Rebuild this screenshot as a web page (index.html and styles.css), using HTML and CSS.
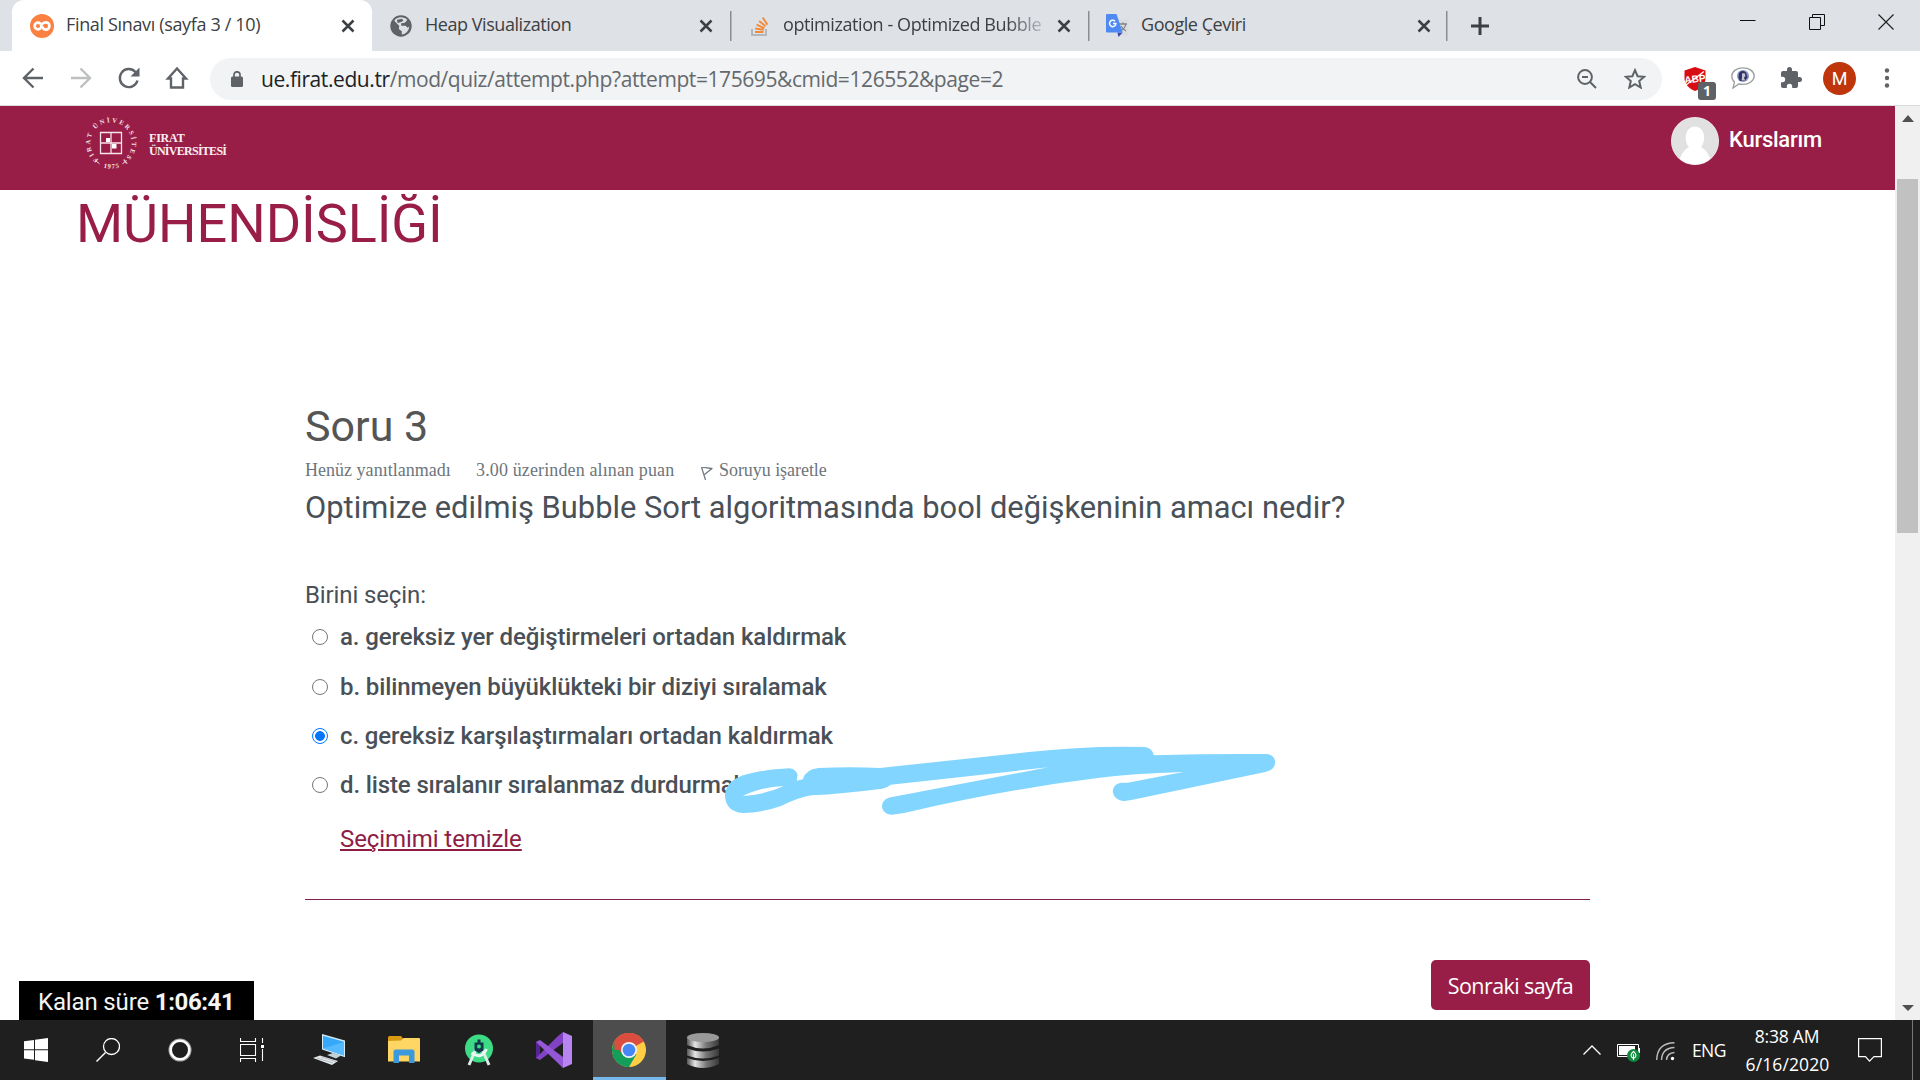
FILE: index.html
```html
<!DOCTYPE html>
<html lang="tr">
<head>
<meta charset="utf-8">
<title>Final Sınavı (sayfa 3 / 10)</title>
<link rel="stylesheet" href="styles.css">
</head>
<body>
<div class="browser">
  <div class="tabstrip">
    <div class="tab active">
      <svg class="fav" viewBox="0 0 24 24"><circle cx="12" cy="12" r="12" fill="#fb8142"/><g fill="none" stroke="#fff" stroke-width="2.700"><circle cx="8" cy="12" r="3.400"/><path d="M11.800 10.500c1.200-1.800 2.500-2.100 4-2.100a3.600 3.600 0 1 1-3.500 4.200"/></g></svg>
      <span class="label t1">Final Sınavı (sayfa 3 / 10)</span>
      <svg class="x" viewBox="0 0 14 14"><path d="M1.500 1.500l11 11M12.500 1.500l-11 11"/></svg>
    </div>
    <div class="tab">
      <svg class="fav globe" viewBox="0 0 22 22"><circle cx="11" cy="11" r="10.700" fill="#5f6368"/><path d="M11 2.300c2.500 0 5 .9 6.300 2.700l-2.500 2.800-3.600.5v2.500h4.300l2.200 2 1.500-1.300c-.2 4.300-3.500 7.600-7.400 8v-3.200l-3-2.300.5-3-5-5.300C5.300 3.800 8.300 2.300 11 2.300z" fill="#dee1e6"/><path d="M7 4.700l5-1 1.500 2-3 1.600-3 .7z" fill="#5f6368"/></svg>
      <span class="label t2">Heap Visualization</span>
      <svg class="x" viewBox="0 0 14 14"><path d="M1.500 1.500l11 11M12.500 1.500l-11 11"/></svg>
    </div>
    <div class="tab sep">
      <svg class="fav so" viewBox="0 0 18 20"><path d="M1 13v6h14v-6" fill="none" stroke="#b4b7ba" stroke-width="2"/><path d="M4 16h8.500M4.200 12.500l8.500 1.300M5.500 8.600l7.900 3.500M8.200 5l6.400 5.300M11.700 1.500l4.800 7.300" stroke="#f28a3c" stroke-width="1.900"/></svg>
      <span class="label t3">optimization - Optimized Bubble</span>
      <svg class="x" viewBox="0 0 14 14"><path d="M1.500 1.500l11 11M12.500 1.500l-11 11"/></svg>
    </div>
    <div class="tab sep">
      <svg class="fav gt" viewBox="0 0 23 23"><rect x="10" y="5" width="12.500" height="16.500" rx="1" fill="#dadcdf"/><path d="M13 10h8M17 8.500V10M19.800 10c-.5 3.500-3 5.700-5.300 6.700M15 12c1 2 2.500 3.700 5 5" fill="none" stroke="#80868b" stroke-width="1.300"/><path d="M11.500 18.500h5.200L12.500 23z" fill="#3949ab"/><path d="M1 0h9.500l6.200 18.500H1a1 1 0 0 1-1-1V1a1 1 0 0 1 1-1z" fill="#4f8af3"/><path d="M9 7.200a3.200 3.200 0 1 0 .9 2.300H7" fill="none" stroke="#fff" stroke-width="1.500"/></svg>
      <span class="label t4">Google Çeviri</span>
      <svg class="x" viewBox="0 0 14 14"><path d="M1.500 1.500l11 11M12.500 1.500l-11 11"/></svg>
    </div>
    <div class="newtab"><svg width="18" height="18" viewBox="0 0 18 18"><path d="M9 0v18M0 9h18" stroke="#3c4043" stroke-width="3"/></svg></div>
    <div class="winbtns">
      <svg width="16" height="16" viewBox="0 0 16 16"><path d="M0 6.500h15.500" stroke="#111" stroke-width="1"/></svg>
      <svg width="16" height="16" viewBox="0 0 16 16"><path d="M.5 3.500h11v12H.500zM3.500 3V.500h12v11H12" fill="none" stroke="#111"/></svg>
      <svg width="16" height="16" viewBox="0 0 16 16"><path d="M.500.500l15 15M15.500.500l-15 15" stroke="#222" stroke-width="1.200"/></svg>
    </div>
  </div>
  <div class="toolbar">
    <svg class="nav" viewBox="0 0 24 24"><path d="M22 12H3.500M12.500 2.500L3 12l9.500 9.500" /></svg>
    <svg class="nav off" viewBox="0 0 24 24"><path d="M2 12h18.500M11.500 2.500L21 12l-9.500 9.500"/></svg>
    <svg class="nav" viewBox="0 0 24 24"><path d="M20.500 14.500A9 9 0 1 1 18.500 6L20 7.500"/><path d="M22.500 1.500v9h-9z" fill="#5f6368" stroke="none"/></svg>
    <svg class="nav" viewBox="0 0 24 24"><path d="M3 12.500L12 2.500l9 10h-3v9H6v-9z"/></svg>
    <div class="omnibox">
      <svg class="lock" viewBox="0 0 12 16"><rect y="5.500" width="12" height="10.500" rx="1.500" fill="#5f6368"/><path d="M3 6V3.800a3 3 0 0 1 6 0V6" fill="none" stroke="#5f6368" stroke-width="1.700"/></svg>
      <span class="url"><b>ue.firat.edu.tr</b>/mod/quiz/attempt.php?attempt=175695&amp;cmid=126552&amp;page=2</span>
      <svg class="mag" viewBox="0 0 20 20"><circle cx="8" cy="8" r="6.900"/><path d="M13 13l6 6M5 8h6"/></svg>
      <svg class="star" viewBox="0 0 22 21"><path d="M11 2.200l2.600 6 6.600.6-5 4.300 1.500 6.400L11 16.100l-5.700 3.400 1.500-6.400-5-4.300 6.600-.6z"/></svg>
    </div>
    <div class="adb">
      <svg width="22" height="24" viewBox="0 0 22 24"><path d="M11 0l10.500 3.500V11c0 6-4 10.500-10.500 13C4.500 21.500.500 17 .500 11V3.500z" fill="#d80d13"/><text x="11" y="15.500" text-anchor="middle" class="abp" transform="rotate(-6 11 12)">ABP</text><path d="M2 18L20 4.500" stroke="#fff" stroke-width="1.300"/></svg>
      <span class="badge">1</span>
    </div>
    <svg class="chat" viewBox="0 0 24 22"><path d="M12 .8c6 0 11.200 3.500 11.200 8.200S18 17.400 12 17.400c-1.500 0-3-.2-4.200-.5L2 21l1.500-6C1.500 13.500.8 11 .8 9 .8 4.300 6 .8 12 .8z" fill="#fff" stroke="#9a9da1" stroke-width="1.300"/><ellipse cx="12" cy="9" rx="6" ry="6" fill="#8d93bd"/><path d="M8 6q3-3.500 7-.5l1.500 5-3 3.500H9l-1.500-3z" fill="#2b3468"/><path d="M11 6.500l2.500-.5 1 3-1.500 1.500 1 3h-3.500l.5-3z" fill="#c9c3cf"/></svg>
    <svg class="puz" viewBox="0 0 24 24"><path d="M20.500 11H19V7a2 2 0 0 0-2-2h-4V3.500a2.500 2.500 0 0 0-5 0V5H4a2 2 0 0 0-2 2v3.800h1.500a2.700 2.700 0 0 1 0 5.400H2V20c0 1.100.9 2 2 2h3.800v-1.500a2.700 2.700 0 0 1 5.400 0V22H17a2 2 0 0 0 2-2v-4h1.500a2.500 2.500 0 0 0 0-5z" fill="#5f6368"/></svg>
    <span class="profile">M</span>
    <svg class="dots" viewBox="0 0 6 20"><circle cx="3" cy="2.500" r="2.200"/><circle cx="3" cy="10" r="2.200"/><circle cx="3" cy="17.500" r="2.200"/></svg>
  </div>
</div>

<div class="viewport">
  <div class="page">
    <header class="site">
      <svg class="seal" viewBox="0 0 54 54">
        <defs><path id="ring" d="M14.400 43.600A20.800 20.800 0 1 1 39.600 43.600"/><path id="foot" d="M15 50.500Q27 54.500 39 50.500"/></defs>
        <text class="ringtext"><textPath href="#ring" textLength="104">FIRAT ÜNİVERSİTESİ</textPath></text>
        <text class="ringtext"><textPath href="#foot" startOffset="4.500" textLength="16">1975</textPath></text>
        <path d="M11.500 44.500l4 3.300M38.500 47.800l4-3.300" stroke="#f5e4ea" fill="none"/>
        <path d="M16.500 16.500h21v21h-21zM27 16.500V27h10.500M27 37.500V27H16.500" fill="none" stroke="#f5e4ea" stroke-width="1.300"/>
        <path d="M22 22h4v4h-4zM28 28h4.500v4.500H28z" fill="#fff"/>
      </svg>
      <div class="uni"><span class="u1">FIRAT</span><span class="u2">ÜNİVERSİTESİ</span></div>
      <svg class="avatar" viewBox="0 0 48 48"><defs><clipPath id="round"><circle cx="24" cy="24" r="23.500"/></clipPath></defs><circle cx="24" cy="24" r="24" fill="#f3e6ea"/><g clip-path="url(#round)"><path d="M0 0h48v48H0z" fill="#e1e1e1"/><path d="M8 48c0-9 5-15 10-18-5-5-5-20 6-20.500 11 .5 11 15.500 6 20.500 5 3 10 9 10 18z" fill="#fff"/></g></svg>
      <span class="courses">Kurslarım</span>
    </header>
    <h1>MÜHENDİSLİĞİ</h1>
    <main>
      <h2>Soru 3</h2>
      <div class="meta">
        <span class="m1">Henüz yanıtlanmadı</span>
        <span class="m2">3.00 üzerinden alınan puan</span>
        <svg viewBox="0 0 12 15" width="12" height="15"><path d="M.500 1l4 13M.800 1.800c4-1.300 6.500 1.300 10.500.5L3.500 8.500" fill="none" stroke="#6c757d" stroke-width="1.200"/></svg>
        <span class="m3">Soruyu işaretle</span>
      </div>
      <p class="question">Optimize edilmiş Bubble Sort algoritmasında bool değişkeninin amacı nedir?</p>
      <p class="prompt">Birini seçin:</p>
      <div class="answers">
        <label><i class="radio"></i><span>a. gereksiz yer değiştirmeleri ortadan kaldırmak</span></label>
        <label><i class="radio"></i><span>b. bilinmeyen büyüklükteki bir diziyi sıralamak</span></label>
        <label><i class="radio on"></i><span>c. gereksiz karşılaştırmaları ortadan kaldırmak</span></label>
        <label><i class="radio"></i><span class="last">d. liste sıralanır sıralanmaz durdurmak</span></label>
      </div>
      <a class="clear">Seçimimi temizle</a>
      <hr>
      <div class="actions"><button>Sonraki sayfa</button></div>
    </main>
    <div class="timer">Kalan süre <b>1:06:41</b></div>
    <svg class="marker" viewBox="0 0 1568 330" preserveAspectRatio="none">
      <path fill="#82d5ff" fill-rule="evenodd" d="M97 170C120 158 170 148 220 145Q236 148 239 165L237 182L252 178Q258 148 290 144Q370 139 440 144L800 97Q950 76 1090 81Q1108 84 1112 106Q1240 101 1390 102Q1409 106 1409 128Q1408 150 1385 156L1060 239L1040 243C1004 242 1003 192 1032 188L1048 188L1184 156Q1060 160 970 175Q750 208 500 279L470 284C440 283 436 238 470 231L500 224L853 142L467 194Q454 207 435 208Q350 222 273 226Q245 231 200 257Q150 279 105 279Q62 275 61 225Q64 187 97 170ZM105 228Q160 224 205 198Q145 202 105 228Z"/>
    </svg>
  </div>
  <div class="scroll">
    <svg width="12" height="8" viewBox="0 0 12 8"><path d="M0 7L6 0l6 7z" fill="#505050"/></svg>
    <i class="thumb"></i>
    <svg class="down" width="12" height="8" viewBox="0 0 12 8"><path d="M0 1l6 6 6-6z" fill="#505050"/></svg>
  </div>
</div>

<footer class="taskbar">
  <div class="apps">
    <span class="a1"><svg width="24" height="24" viewBox="0 0 24 24"><path d="M0 3.200L10 2v9.300H0zM11 1.800L24 0v11.300H11zM0 12.300h10v9.500L0 20.600zM11 12.300h13V24l-13-1.800z" fill="#fff"/></svg></span>
    <span class="a2"><svg width="24" height="24" viewBox="0 0 24 24"><path d="M9.500 14.500L.500 23.500" stroke="#fff" stroke-width="1.400"/><circle cx="15.500" cy="8.500" r="8" fill="none" stroke="#fff" stroke-width="1.300"/></svg></span>
    <span class="a3"><svg width="24" height="24" viewBox="0 0 24 24"><circle cx="12" cy="12" r="10.800" fill="none" stroke="#999" stroke-width="1.500"/><circle cx="12" cy="12" r="9.300" fill="none" stroke="#fff" stroke-width="2.600"/></svg></span>
    <span class="a4"><svg width="24" height="24" viewBox="0 0 24 24"><path d="M.500 0v3.500h15V0M.500 6.500h15v11H.500zM.500 24v-3.500h15V24M22.500 0v5M22.500 11v12" fill="none" stroke="#fff" stroke-width="1.100"/><path d="M21 7h3v3h-3z" fill="#fff"/></svg></span>
    <span class="a5"><svg width="33" height="32" viewBox="0 0 33 32"><path d="M9 0l23 6.500v16.700L9 15.500z" fill="#d4eaf5"/><path d="M10 1.700l21 6v13.800L10 14.500z" fill="#35a8fa"/><path d="M10 14.500L31 8v13.500z" fill="#55baff"/><path d="M14 21l6-2 8 2.500-5 3z" fill="#c3d2d9"/><path d="M0 24l7-2.500 18 5.500-6 4z" fill="#e4e9ec"/><path d="M4 24l16 5M8 23l15 4.500" stroke="#9ba9af" stroke-width=".7"/></svg></span>
    <span class="a6"><svg width="32" height="28" viewBox="0 0 32 28"><path d="M0 1.500Q0 0 1.500 0H13l2 2.500v4H0z" fill="#d99a11"/><path d="M0 5l13-.5L15.500 2H31q1 0 1 1v22.500H0z" fill="#ffd563"/><path d="M5.500 27V15.500q0-2 2-2h17q2 0 2 2V27H21v-7.500H11V27z" fill="#3b99dc"/></svg></span>
    <span class="a7"><svg width="30" height="32" viewBox="0 0 30 32"><circle cx="15" cy="14.500" r="14" fill="#3ddb85"/><path d="M5 31l6.500-15M25 31l-6.500-15" stroke="#d9eee9" stroke-width="3"/><path d="M7.500 19q10 7 15-4" fill="none" stroke="#edf6f4" stroke-width="3"/><path d="M10.500 8.500h3V5.500h3v3h3v8L15 19l-4.500-2.500z" fill="#12394a"/><circle cx="15" cy="12.500" r="2" fill="#3ddb85"/></svg></span>
    <span class="a8"><svg width="36" height="36" viewBox="0 0 36 36"><path d="M0 10l4-2v20l-4-2z" fill="#562399"/><path d="M0 26L22 4l5-4v11L4 28z" fill="#8142c4"/><path d="M0 10l4-2 23 17v11z" fill="#9457d6"/><path d="M27 0l9 4v28l-9 4z" fill="#b784f2"/></svg></span>
    <span class="chrome"><svg width="34" height="34" viewBox="0 0 34 34"><circle cx="17" cy="17" r="17" fill="#ffce44"/><path d="M17 17L2.300 8.500A17 17 0 0 0 17 34l7.400-12.800z" fill="#149e5b"/><path d="M17 17H2.500L2.300 8.500a17 17 0 0 1 29.400 0z" fill="#da4d3f"/><path d="M17 9h14.900l-.2-.5A17 17 0 0 0 2.300 8.500L9.800 21z" fill="#da4d3f"/><circle cx="17" cy="17" r="8" fill="#f4f4f4"/><circle cx="17" cy="17" r="6.300" fill="#4587f3"/></svg></span>
    <span class="a10"><svg width="32" height="35" viewBox="0 0 32 35"><defs><linearGradient id="metal"><stop offset="0" stop-color="#555"/><stop offset=".25" stop-color="#e5e5e5"/><stop offset=".6" stop-color="#777"/><stop offset="1" stop-color="#383838"/></linearGradient></defs><g fill="url(#metal)"><path d="M0 25q16 6 32 0v6q-16 8-32 0z"/><path d="M0 15.500q16 6 32 0v7q-16 6-32 0z"/><path d="M0 5q16 6 32 0v7q-16 7-32 0z"/></g><ellipse cx="16" cy="4.500" rx="16" ry="4.500" fill="#999"/></svg></span>
  </div>
  <div class="tray">
    <svg class="chev" width="18" height="10" viewBox="0 0 18 10"><path d="M.500 9.500L9 1l8.500 8.500" fill="none" stroke="#fff" stroke-width="1.300"/></svg>
    <svg class="bat" width="23" height="18" viewBox="0 0 23 18"><path d="M.500.500h21v12H.500z" fill="none" stroke="#fff"/><path d="M2 2h16v9H2z" fill="#fff"/><path d="M22 4h1v5h-1z" fill="#fff"/><circle cx="16.500" cy="11.500" r="6.500" fill="#10893e"/><path d="M16.500 16V10M16.500 7.500q-5 4 0 7q5-3 0-7z" fill="none" stroke="#fff" stroke-width="1.100"/></svg>
    <svg class="wifi" width="19" height="19" viewBox="0 0 19 19"><g fill="none" stroke="#bbb" stroke-width="1.400"><path d="M.700 18Q1 1 18.500.700"/><path d="M5.500 18Q6 6 18.500 5.500"/><path d="M10.500 18Q11 11 18.500 10.500"/></g><circle cx="16.500" cy="16.500" r="1.700" fill="#fff"/></svg>
    <span class="lang">ENG</span>
    <div class="clock"><span class="time">8:38 AM</span><span class="date">6/16/2020</span></div>
    <svg class="note" width="24" height="24" viewBox="0 0 24 24"><path d="M.600.600h22.800v18H16l-4.500 4.500L7.500 18.600H.600z" fill="none" stroke="#fff" stroke-width="1.200"/></svg>
    <i class="edge"></i>
  </div>
</footer>
</body>
</html>
```
FILE: styles.css
```css
* { box-sizing: border-box; margin: 0; padding: 0; }
body { width: 1920px; height: 1080px; overflow: hidden; background: #fff; font-family: Roboto, sans-serif; display: flex; flex-direction: column; }
svg { display: block; flex: none; }
span { white-space: nowrap; }

/* Browser chrome */
.browser { height: 106px; background: #fff; border-bottom: 1px solid #dadada; font-family: "Open Sans", sans-serif; flex: none; }
.tabstrip { height: 51px; background: #dee1e6; display: flex; padding-left: 12px; }
.tab { width: 358px; height: 51px; display: flex; align-items: center; padding: 0 17px 0 18px; font-size: 18px; color: #3c4043; }
.tab.active { width: 360px; background: #fff; border-radius: 12px 12px 0 0; }
.tab.sep { background: linear-gradient(#8a8d91, #8a8d91) 0 11px / 1.500px 30px no-repeat; }
.tab:nth-child(4) { width: 360px; background: linear-gradient(#8a8d91, #8a8d91) 0 11px / 1.500px 30px no-repeat, linear-gradient(#8a8d91, #8a8d91) 358px 11px / 1.500px 30px no-repeat; }
.fav { width: 24px; height: 24px; margin-right: 12px; }
.globe { width: 22px; height: 22px; margin-right: 13px; }
.so { width: 18px; height: 20px; margin: 0 14px 0 3px; }
.gt { width: 23px; height: 23px; }
.label { flex: 1; overflow: hidden; line-height: 30px; margin: -3px 22px 0 0; }
.t1 { letter-spacing: -.35px; }
.t2 { letter-spacing: -.45px; }
.t3 { letter-spacing: -.42px; margin-right: 0; overflow: visible; width: 260px; flex: none; -webkit-mask-image: linear-gradient(90deg, #000 86%, transparent 104%); mask-image: linear-gradient(90deg, #000 86%, transparent 104%); }
.t4 { letter-spacing: -.45px; }
.x { width: 14px; height: 14px; margin-left: auto; stroke: #3c4043; stroke-width: 2.500; }
.newtab { width: 64px; display: flex; align-items: center; justify-content: center; }
.winbtns { display: flex; margin-left: auto; gap: 53px; padding: 14px 26px 0 0; }
.toolbar { height: 54px; display: flex; align-items: center; padding: 0 30px 0 21px; }
.nav { width: 24px; height: 24px; margin-right: 24px; fill: none; stroke: #5f6368; stroke-width: 2.400; }
.nav.off { stroke: #bdbfc1; }
.nav:nth-child(4) { margin-right: 21px; }
.omnibox { width: 1452px; height: 42px; border-radius: 21px; background: #f1f3f4; display: flex; align-items: center; padding: 0 16px 0 21px; margin-top: 1px; }
.lock { width: 12px; height: 16px; margin-right: 18px; }
.url { font-size: 21px; line-height: 40px; letter-spacing: -.42px; color: #65696d; flex: 1; }
.url b { font-weight: 400; color: #202124; }
.mag { width: 20px; height: 20px; margin-right: 27px; fill: none; stroke: #5f6368; stroke-width: 2; }
.star { width: 22px; height: 21px; fill: none; stroke: #5f6368; stroke-width: 2; }
.adb { position: relative; margin: 1px 25px 0 22px; }
.abp { font: 700 10px "Liberation Sans", sans-serif; fill: #fff; }
.badge { position: absolute; left: 14px; top: 15px; width: 18px; height: 18px; border-radius: 3px; background: #5e6165; color: #fff; font: 700 14px/18px "Open Sans", sans-serif; text-align: center; }
.chat { width: 24px; height: 22px; margin-right: 23px; }
.puz { width: 26px; height: 24px; margin-right: 19px; }
.profile { width: 33px; height: 33px; border-radius: 50%; background: #bf360c; color: #fff; font: 400 18px/33px Roboto, sans-serif; text-align: center; margin-right: 28px; }
.dots { width: 6px; height: 20px; fill: #5f6368; }

/* Page */
.viewport { height: 914px; display: flex; flex: none; }
.page { width: 1895px; position: relative; overflow: hidden; }
.site { height: 84px; background: #991e47; display: flex; padding-left: 84px; color: #fff; }
.seal { width: 54px; height: 54px; margin-top: 10px; overflow: visible; }
.ringtext { font: 700 6.500px "Liberation Serif", serif; fill: #f5e4ea; }
.uni { display: flex; flex-direction: column; margin: 26px 0 0 11px; font: 700 12px/13px "Liberation Serif", serif; color: #fbeef2; }
.u1 { letter-spacing: -.2px; }
.u2 { letter-spacing: -.73px; }
.avatar { width: 48px; height: 48px; margin: 11px 10px 0 auto; }
.courses { width: 166px; font-size: 22px; line-height: 28px; margin-top: 20px; font-weight: 500; letter-spacing: -.25px; }
h1 { font-weight: 400; font-size: 54px; line-height: 59px; height: 60px; margin: 4px 0 0 76px; color: #991e47; overflow: hidden; letter-spacing: -.05px; }
main { width: 1285px; margin: 147px 0 0 305px; color: #495057; }
h2 { font-size: 43px; line-height: 50px; font-weight: 400; color: #555; }
.meta { display: flex; margin-top: 7px; height: 24px; font: 18px/24px "Liberation Serif", serif; color: #6c757d; }
.m1 { width: 171px; letter-spacing: .02px; }
.m2 { width: 225px; letter-spacing: .13px; }
.m3 { margin-left: 6px; letter-spacing: -.05px; }
.meta svg { margin-top: 8px; }
.question { font-size: 30.850px; line-height: 40px; margin-top: 6px; }
.prompt { font-size: 24px; line-height: 32px; margin-top: 51px; letter-spacing: -.12px; }
.answers { display: flex; flex-direction: column; gap: 17.300px; padding: 10px 0 0 7px; font-size: 24px; line-height: 32px; font-weight: 500; letter-spacing: -.1px; }
.answers label { display: flex; align-items: center; height: 32px; }
.answers label:nth-child(2) { margin: .5px 0 -.5px; }
.last { letter-spacing: -.13px; }
.radio { width: 16px; height: 16px; border: 1.500px solid #767676; border-radius: 50%; margin-right: 12px; flex: none; }
.radio.on { border-color: #0075ff; background: radial-gradient(circle, #0075ff 4.500px, #fff 5.200px); }
.clear { display: block; width: max-content; margin: 22px 0 0 35px; font-size: 24px; line-height: 32px; letter-spacing: -.08px; color: #8d1d45; text-decoration: underline; text-decoration-thickness: 2px; text-underline-offset: 2px; }
hr { border: 0; height: 1px; background: #81204a; margin-top: 44px; }
.actions { display: flex; justify-content: flex-end; margin-top: 60px; }
button { width: 159px; height: 50px; padding-top: 2px; border: 0; border-radius: 5px; background: #991e47; color: #fff; font: 21.500px "Open Sans", sans-serif; letter-spacing: -.6px; white-space: nowrap; }
.timer { position: absolute; left: 19px; bottom: 0; width: 235px; height: 39px; padding-left: 19px; background: #000; color: #f4f4f4; font-size: 24px; line-height: 42px; letter-spacing: -.15px; white-space: nowrap; }
.timer b { letter-spacing: -.4px; }
.marker { position: absolute; left: 700px; top: 614px; width: 640px; height: 110px; }
.scroll { width: 25px; background: #f0f0f0; display: flex; flex-direction: column; align-items: center; padding: 9px 0 8px; }
.thumb { width: 21px; height: 354px; margin-top: 56px; background: #c1c1c1; }
.down { margin-top: auto; }

/* Taskbar */
.taskbar { height: 60px; background: #1f1f1f; display: flex; justify-content: space-between; color: #fff; font-family: "Open Sans", sans-serif; flex: none; }
.apps { display: flex; }
.apps span { width: 72px; height: 60px; display: flex; align-items: center; justify-content: center; }
.apps .a5 { width: 82px; }
.apps .a6 { width: 68px; }
.apps .a7 { width: 82px; }
.apps .a8 { width: 73px; padding-right: 5px; }
.apps .chrome { background: #4d4d4d; border-bottom: 3px solid #76b9ed; width: 73px; padding: 3px 1px 0 0; }
.apps .a10 { width: 74px; }
.tray { display: flex; align-items: center; width: 337px; }
.bat { margin: 5px 0 0 16px; }
.wifi { margin: 2px 0 0 16px; }
.lang { width: 37px; margin-left: 17px; font-size: 17.500px; letter-spacing: -.6px; }
.clock { display: flex; flex-direction: column; align-items: center; width: 117px; font-size: 17.500px; line-height: 28px; letter-spacing: -.2px; }
.time { margin-right: 1px; }
.date { letter-spacing: .1px; }
.note { margin-left: 12px; }
.edge { width: 1px; height: 60px; background: #777; margin-left: 30px; }
```
